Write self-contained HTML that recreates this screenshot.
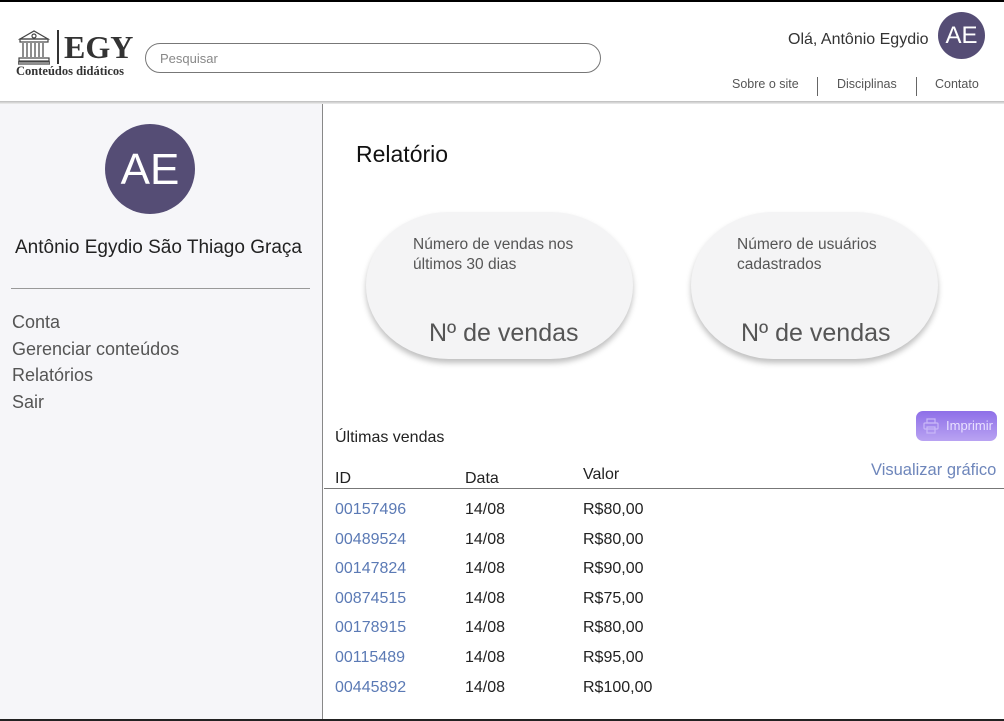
<!DOCTYPE html>
<html><head><meta charset="utf-8"><style>
*{margin:0;padding:0;box-sizing:border-box}
body{width:1004px;height:721px;overflow:hidden;background:#fff;font-family:"Liberation Sans",sans-serif;position:relative;color:#222}
.a{position:absolute}
.av{background:#554d75;color:#fff;border-radius:50%;text-align:center}
.card{background:#f4f4f5;border-radius:90px/80px;box-shadow:0 4px 6px rgba(0,0,0,.25)}
.id{color:#5b7ab5}
.row{position:absolute;font-size:16px;color:#222}
</style></head><body>
<div class="a" style="left:0;top:0;width:1004px;height:2px;background:#000"></div>
<div class="a" style="left:0;top:719px;width:1004px;height:2px;background:#222"></div>
<!-- header -->
<div class="a" style="left:0;top:101px;width:1004px;height:3px;background:linear-gradient(#bbb,#eee)"></div>
<svg class="a" style="left:18px;top:29px" width="32" height="36" viewBox="0 0 32 36" fill="none" stroke="#444" stroke-width="1.2">
<path d="M2 10 L16 2 L30 10 Z"/><circle cx="16" cy="7" r="2"/><rect x="2" y="10" width="28" height="3"/>
<path d="M5 14v14M9 14v14M13 14v14M17 14v14M21 14v14M25 14v14"/><rect x="1" y="29" width="30" height="3"/><rect x="0" y="33" width="32" height="2"/>
</svg>
<div class="a" style="left:57px;top:30px;width:1.5px;height:34px;background:#333"></div>
<div class="a" style="left:64px;top:29px;font-family:'Liberation Serif',serif;font-size:32px;font-weight:bold;color:#333;letter-spacing:0px">EGY</div>
<div class="a" style="left:16px;top:64px;font-family:'Liberation Serif',serif;font-size:12.5px;font-weight:bold;color:#333">Conteúdos didáticos</div>
<div class="a" style="left:145px;top:43px;width:456px;height:30px;border:1px solid #777;border-radius:15px;font-size:13px;color:#888;padding:7px 14px">Pesquisar</div>
<div class="a" style="left:788px;top:31px;font-size:16px;color:#333">Olá, Antônio Egydio</div>
<div class="a av" style="left:938px;top:12px;width:47px;height:47px;font-size:24px;line-height:47px">AE</div>
<div class="a" style="left:732px;top:77px;font-size:12.5px;color:#555">Sobre o site</div>
<div class="a" style="left:817px;top:77px;width:1px;height:19px;background:#666"></div>
<div class="a" style="left:837px;top:77px;font-size:12.5px;color:#555">Disciplinas</div>
<div class="a" style="left:916px;top:77px;width:1px;height:19px;background:#666"></div>
<div class="a" style="left:935px;top:77px;font-size:12.5px;color:#555">Contato</div>
<!-- sidebar -->
<div class="a" style="left:0;top:104px;width:323px;height:615px;background:#f6f6f9;border-right:1.5px solid #888"></div>
<div class="a av" style="left:105px;top:124px;width:90px;height:90px;font-size:44px;line-height:92px">AE</div>
<div class="a" style="left:15px;top:237px;font-size:19px;color:#222">Antônio Egydio São Thiago Graça</div>
<div class="a" style="left:11px;top:288px;width:299px;height:1px;background:#999"></div>
<div class="a" style="left:12px;top:309px;font-size:18px;color:#555;line-height:26.5px">Conta<br>Gerenciar conteúdos<br>Relatórios<br>Sair</div>
<!-- main -->
<div class="a" style="left:356px;top:141px;font-size:23px;color:#111">Relatório</div>
<div class="a card" style="left:366px;top:212px;width:267px;height:147px"></div>
<div class="a" style="left:413px;top:235px;font-size:15.5px;color:#555;line-height:20px">Número de vendas nos<br>últimos 30 dias</div>
<div class="a" style="left:429px;top:319px;font-size:25px;color:#555">Nº de vendas</div>
<div class="a card" style="left:691px;top:212px;width:247px;height:147px"></div>
<div class="a" style="left:737px;top:235px;font-size:15.5px;color:#555;line-height:20px">Número de usuários<br>cadastrados</div>
<div class="a" style="left:741px;top:319px;font-size:25px;color:#555">Nº de vendas</div>
<div class="a" style="left:916px;top:411px;width:81px;height:30px;border-radius:7px;background:linear-gradient(#8e6fe8,#b9a3f2);color:#e8e0ff;font-size:13px;line-height:30px;padding-left:30px">Imprimir</div>
<svg class="a" style="left:923px;top:418px" width="16" height="16" viewBox="0 0 16 16" fill="none" stroke="#c9b8f7" stroke-width="1.2"><rect x="4" y="1" width="8" height="4"/><rect x="1" y="5" width="14" height="6" rx="1"/><rect x="4" y="9" width="8" height="6"/></svg>
<div class="a" style="left:335px;top:429px;font-size:16px">Últimas vendas</div>
<div class="a" style="left:871px;top:461px;font-size:16.5px;color:#6e86bb">Visualizar gráfico</div>
<div class="row" style="left:335px;top:470px">ID</div>
<div class="row" style="left:465px;top:470px">Data</div>
<div class="row" style="left:583px;top:466px">Valor</div>
<div class="a" style="left:324px;top:488px;width:680px;height:1px;background:#777"></div>
<div class="row" style="left:335px;top:495px;line-height:29.6px"><span class="id">00157496<br>00489524<br>00147824<br>00874515<br>00178915<br>00115489<br>00445892</span></div>
<div class="row" style="left:465px;top:495px;line-height:29.6px">14/08<br>14/08<br>14/08<br>14/08<br>14/08<br>14/08<br>14/08</div>
<div class="row" style="left:583px;top:495px;line-height:29.6px">R$80,00<br>R$80,00<br>R$90,00<br>R$75,00<br>R$80,00<br>R$95,00<br>R$100,00</div>
</body></html>
